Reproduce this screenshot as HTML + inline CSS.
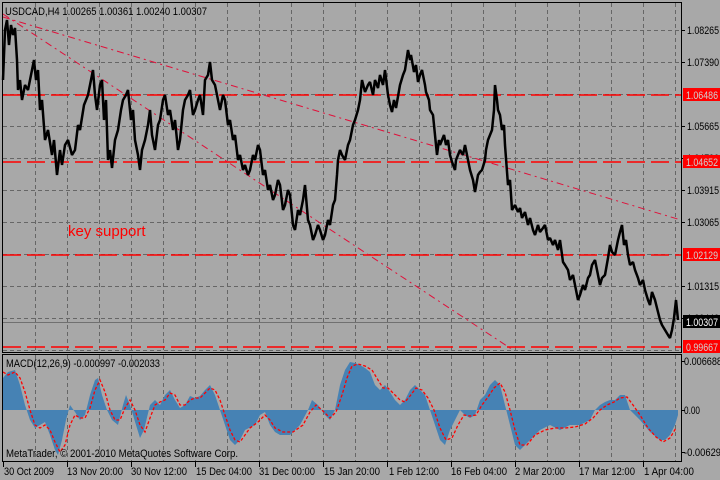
<!DOCTYPE html>
<html><head><meta charset="utf-8"><style>
html,body{margin:0;padding:0;background:#a8a8a8;}
svg{display:block;font-family:"Liberation Sans",sans-serif;}
</style></head><body>
<svg width="720" height="480" viewBox="0 0 720 480" xmlns="http://www.w3.org/2000/svg">
<rect width="720" height="480" fill="#a8a8a8"/>
<g stroke="#666" stroke-width="1" stroke-dasharray="4,3" fill="none">
<path d="M35.5 3V352M67.5 3V352M99.5 3V352M131.5 3V352M163.5 3V352M195.5 3V352M227.5 3V352M259.5 3V352M291.5 3V352M323.5 3V352M355.5 3V352M387.5 3V352M419.5 3V352M451.5 3V352M483.5 3V352M515.5 3V352M547.5 3V352M579.5 3V352M611.5 3V352M643.5 3V352M675.5 3V352"/>
<path d="M3 30.5H681M3 62.5H681M3 94.5H681M3 126.5H681M3 158.5H681M3 190.5H681M3 222.5H681M3 254.5H681M3 286.5H681M3 318.5H681M3 350.5H681"/>
<path d="M35.5 355V461M67.5 355V461M99.5 355V461M131.5 355V461M163.5 355V461M195.5 355V461M227.5 355V461M259.5 355V461M291.5 355V461M323.5 355V461M355.5 355V461M387.5 355V461M419.5 355V461M451.5 355V461M483.5 355V461M515.5 355V461M547.5 355V461M579.5 355V461M611.5 355V461M643.5 355V461M675.5 355V461"/>
</g>
<path d="M3 322.5H681" stroke="#707070" stroke-width="1"/>
<g stroke="#ff0000" stroke-width="1.5" stroke-dasharray="18,6" fill="none">
<path d="M3 95H681M3 162H681M3 255H681M3 347H681"/>
</g>
<g stroke="#e0103a" stroke-width="1" stroke-dasharray="7,4,2,4" fill="none">
<path d="M3 17L681 220"/>
<path d="M3 14L513 350"/>
</g>
<polyline fill="none" stroke="#000" stroke-width="2.5" stroke-linejoin="bevel" points="3,80 5,30 7,20 9,45 11,25 13,35 15,28 17,60 18,90 20,80 22,100 25,85 28,90 31,75 34,60 36,80 38,70 40,110 42,100 45,140 48,130 52,155 54,140 57,175 60,150 62,165 65,145 68,140 72,155 75,150 78,125 80,130 84,105 88,95 91,80 93,70 95,95 97,110 100,85 102,80 104,120 106,100 108,160 110,150 112,168 115,140 118,130 121,110 123,100 126,95 128,90 131,120 133,110 135,140 138,155 140,170 142,150 145,140 148,125 150,110 152,135 155,150 158,125 160,120 163,100 165,95 168,115 170,110 173,130 175,120 178,150 180,140 183,110 185,100 188,95 190,90 193,115 195,110 198,100 200,95 203,115 205,80 208,75 210,62 212,80 215,85 218,100 220,110 223,95 225,100 228,125 230,120 233,140 235,135 238,160 240,155 243,170 245,165 248,175 250,170 253,155 255,160 258,145 260,150 263,175 265,170 268,190 270,185 273,200 275,195 278,180 280,185 283,210 285,205 288,190 290,195 293,225 295,230 298,210 300,215 303,200 305,185 308,220 310,225 313,240 315,235 318,225 320,230 323,240 325,235 328,220 330,225 333,205 335,200 337,175 338,160 340,150 342,155 345,160 348,145 350,140 353,125 355,120 358,110 360,100 362,80 365,92 368,85 370,82 373,95 375,80 378,88 380,75 383,85 385,70 388,95 390,105 392,112 394,100 396,108 400,85 403,75 405,70 408,50 410,60 411,55 414,72 416,65 418,82 420,75 422,70 425,85 426,92 429,100 430,110 433,115 434,125 437,155 439,140 440,145 444,135 446,145 448,140 450,155 452,162 455,170 456,160 460,150 463,155 465,145 468,160 470,170 473,180 475,192 478,175 480,172 482,170 485,160 486,150 488,140 490,135 492,130 494,110 495,85 497,100 498,110 500,115 502,130 504,125 505,145 508,185 510,180 512,210 515,205 518,212 520,208 522,218 525,212 528,225 530,218 533,230 535,235 538,225 540,232 543,228 545,225 548,240 550,238 553,245 555,240 558,250 560,240 563,262 565,265 568,270 570,280 573,275 576,290 578,300 580,295 583,285 585,290 588,278 590,275 592,265 595,260 597,270 600,285 602,278 605,275 608,258 610,245 612,252 615,255 618,240 620,232 622,225 624,245 626,240 628,255 630,265 633,262 635,270 638,278 640,285 643,280 645,290 648,300 650,305 652,292 655,300 658,312 660,320 662,325 665,330 668,335 670,338 672,330 674,318 676,300 678,320"/>
<text x="68" y="236" fill="#ff0000" font-size="15">key support</text>
<text x="5" y="15" fill="#000" font-size="11" textLength="202" lengthAdjust="spacingAndGlyphs">USDCAD,H4  1.00265 1.00361 1.00240 1.00307</text>
<path fill="#4682b4" d="M3 410 L3 378 L8 372 L15 370 L20 385 L25 405 L30 420 L35 428 L40 425 L45 422 L50 435 L55 450 L58 455 L62 440 L66 420 L70 405 L75 412 L80 420 L85 415 L90 395 L95 380 L98 378 L102 395 L107 410 L112 420 L118 425 L123 405 L126 395 L130 405 L136 425 L140 438 L144 430 L150 405 L155 400 L160 405 L165 395 L170 390 L175 400 L180 408 L185 405 L190 396 L195 398 L200 396 L205 390 L210 385 L215 395 L220 410 L225 425 L230 440 L235 445 L240 440 L245 430 L255 425 L260 415 L265 412 L270 425 L275 432 L280 435 L290 435 L300 425 L308 410 L312 400 L318 405 L325 415 L330 420 L335 410 L340 385 L345 370 L350 362 L355 363 L360 365 L365 368 L370 372 L375 385 L380 390 L385 385 L390 392 L395 400 L400 405 L405 400 L410 390 L415 385 L420 390 L425 395 L430 410 L435 425 L440 440 L445 445 L450 430 L455 420 L460 410 L465 415 L470 418 L475 415 L480 400 L485 395 L490 385 L495 380 L500 385 L505 405 L510 425 L515 445 L520 450 L530 440 L540 430 L550 425 L560 430 L570 425 L580 425 L590 420 L595 410 L600 405 L605 402 L610 400 L615 400 L620 395 L625 395 L630 410 L640 420 L650 432 L660 440 L665 440 L670 435 L675 425 L678 415 L678 410 Z"/>
<polyline fill="none" stroke="#ff0000" stroke-width="1.3" stroke-dasharray="3,2" points="3,372 8,375 15,372 20,378 25,392 30,410 35,425 40,428 45,425 50,430 55,442 60,452 65,445 70,425 75,415 80,418 85,418 90,408 95,390 100,380 105,392 110,410 115,420 120,420 125,408 130,400 135,410 140,425 145,432 150,418 155,405 160,402 165,400 170,393 175,395 180,405 185,405 190,400 195,398 200,398 205,393 210,388 215,390 220,400 225,415 230,430 235,440 240,442 245,435 250,428 258,422 265,415 270,420 275,428 283,432 293,432 303,425 310,412 316,405 322,410 330,418 336,412 342,395 347,378 352,366 358,364 365,366 372,370 378,380 383,388 388,388 393,393 400,400 405,402 410,396 416,388 422,390 428,398 434,410 440,428 446,440 452,438 458,425 464,415 470,416 476,415 482,405 488,397 494,388 500,383 505,392 510,410 515,430 520,445 527,445 535,435 545,430 555,428 565,428 575,427 585,424 593,418 600,410 607,405 614,402 620,398 627,397 633,405 640,415 648,428 656,437 663,442 670,438 676,428"/>
<text x="6" y="367" fill="#000" font-size="11" textLength="154" lengthAdjust="spacingAndGlyphs">MACD(12,26,9) -0.000997 -0.002033</text>
<text x="6" y="457" fill="#000" font-size="11" textLength="232" lengthAdjust="spacingAndGlyphs">MetaTrader, © 2001-2010 MetaQuotes Software Corp.</text>
<g stroke="#000" stroke-width="1" fill="none">
<rect x="2.5" y="2.5" width="679" height="350"/>
<rect x="2.5" y="354.5" width="679" height="107"/>
</g>
<g stroke="#000" stroke-width="1">
<path d="M681 30.5h4M681 62.5h4M681 126.5h4M681 158.5h4M681 190.5h4M681 222.5h4M681 286.5h4M681 318.5h4M681 361.5h4M681 410.5h4M681 452.5h4"/>
<path d="M3.5 462v5M67.5 462v5M131.5 462v5M195.5 462v5M259.5 462v5M323.5 462v5M387.5 462v5M451.5 462v5M515.5 462v5M579.5 462v5M643.5 462v5"/>
</g>
<g font-size="11" fill="#000" lengthAdjust="spacingAndGlyphs">
<text x="687" y="34" textLength="32" lengthAdjust="spacingAndGlyphs">1.08265</text>
<text x="687" y="66" textLength="32" lengthAdjust="spacingAndGlyphs">1.07390</text>
<text x="687" y="130" textLength="32" lengthAdjust="spacingAndGlyphs">1.05665</text>
<text x="687" y="162" textLength="32" lengthAdjust="spacingAndGlyphs">1.04790</text>
<text x="687" y="194" textLength="32" lengthAdjust="spacingAndGlyphs">1.03915</text>
<text x="687" y="226" textLength="32" lengthAdjust="spacingAndGlyphs">1.03065</text>
<text x="687" y="290" textLength="32" lengthAdjust="spacingAndGlyphs">1.01315</text>
<text x="687" y="322" textLength="32" lengthAdjust="spacingAndGlyphs">1.00440</text>
<text x="684" y="365" textLength="38" lengthAdjust="spacingAndGlyphs">0.006688</text>
<text x="684" y="414" textLength="16" lengthAdjust="spacingAndGlyphs">0.00</text>
<text x="684" y="456" textLength="37" lengthAdjust="spacingAndGlyphs">-0.00629</text>
</g>
<rect x="683" y="88" width="37" height="13" fill="#ff0000"/>
<text x="686" y="99" font-size="11" fill="#d0d0d0" textLength="32" lengthAdjust="spacingAndGlyphs">1.06486</text>
<rect x="683" y="155" width="37" height="13" fill="#ff0000"/>
<text x="686" y="166" font-size="11" fill="#d0d0d0" textLength="32" lengthAdjust="spacingAndGlyphs">1.04652</text>
<rect x="683" y="248" width="37" height="13" fill="#ff0000"/>
<text x="686" y="259" font-size="11" fill="#d0d0d0" textLength="32" lengthAdjust="spacingAndGlyphs">1.02129</text>
<rect x="683" y="315" width="37" height="13" fill="#000"/>
<text x="686" y="326" font-size="11" fill="#fff" textLength="32" lengthAdjust="spacingAndGlyphs">1.00307</text>
<rect x="683" y="340" width="37" height="13" fill="#ff0000"/>
<text x="686" y="351" font-size="11" fill="#d0d0d0" textLength="32" lengthAdjust="spacingAndGlyphs">0.99667</text>
<g font-size="11" fill="#000">
<text x="4" y="475" textLength="50" lengthAdjust="spacingAndGlyphs">30 Oct 2009</text>
<text x="67" y="475" textLength="56" lengthAdjust="spacingAndGlyphs">13 Nov 20:00</text>
<text x="131" y="475" textLength="56" lengthAdjust="spacingAndGlyphs">30 Nov 12:00</text>
<text x="196" y="475" textLength="56" lengthAdjust="spacingAndGlyphs">15 Dec 04:00</text>
<text x="259" y="475" textLength="56" lengthAdjust="spacingAndGlyphs">31 Dec 00:00</text>
<text x="324" y="475" textLength="56" lengthAdjust="spacingAndGlyphs">15 Jan 20:00</text>
<text x="389" y="475" textLength="50" lengthAdjust="spacingAndGlyphs">1 Feb 12:00</text>
<text x="451" y="475" textLength="56" lengthAdjust="spacingAndGlyphs">16 Feb 04:00</text>
<text x="515" y="475" textLength="50" lengthAdjust="spacingAndGlyphs">2 Mar 20:00</text>
<text x="579" y="475" textLength="56" lengthAdjust="spacingAndGlyphs">17 Mar 12:00</text>
<text x="644" y="475" textLength="50" lengthAdjust="spacingAndGlyphs">1 Apr 04:00</text>
</g>
</svg>
</body></html>
